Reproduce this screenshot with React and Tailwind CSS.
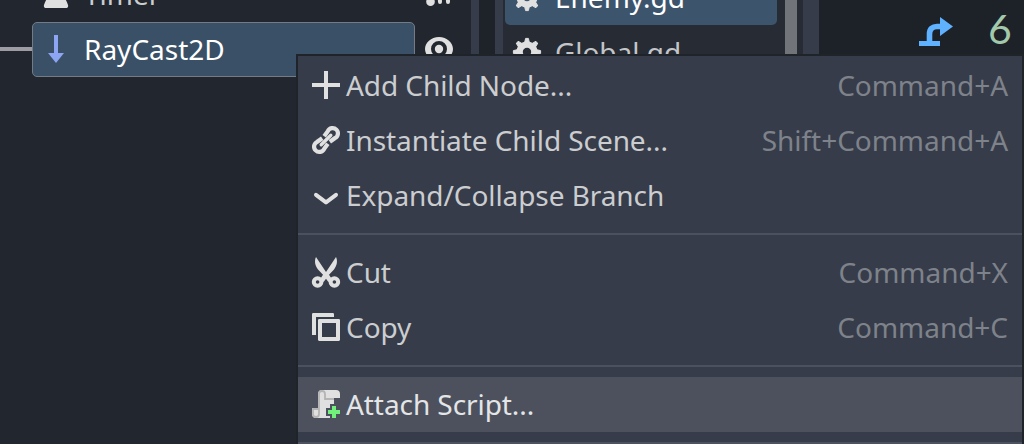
import React from 'react';

const ICON = 'block h-8 w-8 shrink-0';

function PlusIcon() {
  return (
    <svg viewBox="0 0 16 16" className={ICON} fill="#e0e0e0">
      <path d="M7 1v6H1v2h6v6h2V9h6V7H9V1z" />
    </svg>
  );
}

function LinkIcon() {
  return (
    <svg viewBox="0 0 16 16" className={ICON} fill="none" stroke="#e0e0e0" strokeWidth="2.1">
      <path d="M7.1 6.1 8.900 3.600a2.650 2.650 0 1 1 3.500 3.500L9.900 8.900" />
      <path d="M8.900 9.900 7.100 12.400a2.650 2.650 0 1 1-3.500-3.500L6.100 7.100" />
      <path d="M5.6 10.4 10.4 5.6" strokeWidth="1.7" strokeLinecap="round" />
    </svg>
  );
}

function ChevronIcon() {
  return (
    <svg viewBox="0 0 16 16" className={ICON} fill="none" stroke="#e0e0e0" strokeWidth="2" strokeLinecap="round" strokeLinejoin="round">
      <path d="m3 7.9 5 3.8 5-3.8" />
    </svg>
  );
}

function CutIcon() {
  return (
    <svg viewBox="0 0 16 16" className={ICON} fill="#e0e0e0">
      <path d="M3 .5C2 2.6 2.6 5 4 6.700L6.500 9.400 5 11.600l1.800 1.400L8 11.400l1.200 1.600 1.800-1.400-1.500-2.200L12 6.700C13.400 5 14 2.600 13 .5L8 8z" />
      <g fill="none" stroke="#e0e0e0" strokeWidth="2">
        <circle cx="3.8" cy="13" r="1.900" />
        <circle cx="12.2" cy="13" r="1.900" />
      </g>
    </svg>
  );
}

function CopyIcon() {
  return (
    <svg viewBox="0 0 16 16" className={ICON} fill="#e0e0e0">
      <path d="M1.6 1A.6.6 0 0 0 1 1.6V12h2V3h9V1.6a.6.6 0 0 0-.6-.6z" />
      <path fillRule="evenodd" d="M4.6 4a.6.6 0 0 0-.6.6v9.8c0 .3.3.6.6.6h9.8c.3 0 .6-.3.6-.6V4.6a.6.6 0 0 0-.6-.6zM6 6h7v7H6z" />
    </svg>
  );
}

function ScriptIcon() {
  return (
    <svg viewBox="0 0 16 16" className={ICON}>
      <path fill="#e0e0e0" d="M6 1a2 2 0 0 0-2 2v7H1v3a2 2 0 0 0 2 2h7v-1H8v-4h2V8h2V5h3V3a2 2 0 0 0-2-2z" />
      <path fill="none" stroke="#b4b4b4" strokeWidth=".9" d="M4.5 10.5h-3V13a1.5 1.5 0 0 0 3 0V3a1.5 1.5 0 0 1 3 0v2.5H12" />
      <path fill="#72f07c" d="M11 9h2v2h2v2h-2v2h-2v-2H9v-2h2z" />
    </svg>
  );
}

function GearIcon() {
  return (
    <svg viewBox="0 0 16 16" className={ICON} fill="none">
      <circle cx="8" cy="8" r="3.7" stroke="#e0e0e0" strokeWidth="3.2" />
      <g fill="#e0e0e0">
        {[0, 45, 90, 135, 180, 225, 270, 315].map((a) => (
          <path key={a} d="M7.3 1.2h1.4l.6 2.6H6.7z" stroke="#e0e0e0" strokeWidth=".5" strokeLinejoin="round" transform={`rotate(${a} 8 8)`} />
        ))}
      </g>
    </svg>
  );
}

function MenuItem({ icon, label, shortcut, active }) {
  return (
    <div className={`flex h-[55px] shrink-0 items-start pr-[14px] pl-3 pt-[11px] ${active ? 'bg-[#4c515d] text-[#e4e5e7]' : 'text-[#cbcdd0]'}`}>
      {icon}
      <span className="-mt-[3px] ml-1 flex-1 tracking-[-0.07px]">{label}</span>
      <span className="-mt-[3px] tracking-[-0.03px] text-[#7e828a]">{shortcut}</span>
    </div>
  );
}

function Separator() {
  return (
    <div className="flex h-[22px] shrink-0 items-center">
      <div className="h-[2px] w-full bg-[#4b515e]" />
    </div>
  );
}

function SceneTree() {
  return (
    <div className="h-full w-[471px] shrink-0 overflow-hidden bg-[#22262e]">
      <div className="-mt-[33px] flex h-[55px] items-start pt-[11px]">
        <svg viewBox="0 0 32 32" className="ml-10 h-8 w-8" fill="#e0e0e0">
          <path d="M9 2h14v12l-4 4 4 1c3 2 4 5 5 8 .5 2-.5 3-2 3H6c-1.5 0-2.500-1-2-3 1-3 2-6 5-8l4-1-4-4z" />
        </svg>
        <span className="-mt-[3px] ml-3 w-[338px] text-[#cbcdd0]">Timer</span>
        <svg viewBox="0 0 32 32" className="h-8 w-8" fill="none" stroke="#e0e0e0" strokeWidth="4" strokeLinecap="round">
          <circle cx="8.5" cy="23.7" r="4.3" fill="#e0e0e0" stroke="none" />
          <path d="M8 13c6 0 10 4 10 11M8 5c11 0 18 7 18 19" />
        </svg>
      </div>
      <div className="flex h-[55px] items-start">
        <div className="mt-[25px] h-1 w-8 bg-[#9c9ca2]" />
        <div className="flex h-[55px] w-[383px] items-start rounded-[5px] border border-[#737b84] bg-[#3a5067] pt-[10px]">
          <svg viewBox="0 0 32 32" className="ml-[7px] h-8 w-8" fill="#8da5f3">
            <path d="M14 2h4v18h6l-8 10-8-10h6z" />
          </svg>
          <span className="-mt-[3px] ml-3 text-white">RayCast2D</span>
        </div>
        <svg viewBox="0 0 32 32" className="mt-[11px] ml-2 h-8 w-8">
          <path
            fill="#e0e0e0"
            fillRule="evenodd"
            d="M16 4C8 4 2 10 2 16s6 12 14 12 14-6 14-12S24 4 16 4zm0 4a8 8 0 1 1 0 16 8 8 0 0 1 0-16z"
          />
          <circle cx="16" cy="16" r="4.2" fill="#e0e0e0" />
        </svg>
      </div>
    </div>
  );
}

function ScriptList() {
  return (
    <div className="flex h-full w-[300px] shrink-0 overflow-hidden bg-[#262b34]">
      <div className="ml-[2px] w-[272px]">
        <div className="-mt-[30px] flex h-[55px] items-start rounded-[5px] bg-[#3d546d] pt-[11px]">
          <div className="ml-[6px]"><GearIcon /></div>
          <span className="-mt-[3px] ml-3 text-white">Enemy.gd</span>
        </div>
        <div className="flex h-[55px] items-start pt-[11px]">
          <div className="ml-[6px]"><GearIcon /></div>
          <span className="-mt-[3px] ml-3 tracking-[-0.06px] text-[#c3c5c8]">Global.gd</span>
        </div>
      </div>
      <div className="ml-2 h-full w-3 bg-[#717479]" />
    </div>
  );
}

export default function App() {
  return (
    <div className="relative h-[444px] w-[1024px] overflow-hidden bg-[#1d2229] font-['Noto_Sans',sans-serif] text-[28px] leading-[38px] whitespace-nowrap">
      <div className="flex h-full">
        <SceneTree />
        <div className="w-2 shrink-0 bg-[#363c4a]" />
        <div className="w-4 shrink-0 bg-[#1e2329]" />
        <div className="w-2 shrink-0 bg-[#363c4a]" />
        <ScriptList />
        <div className="w-4 shrink-0 bg-[#363c4a]" />
        <div className="flex h-[62px] flex-1 items-start bg-[#1d2229]">
          <svg viewBox="0 0 36 32" className="mt-[15px] ml-[99px] h-8 w-9">
            <path fill="none" stroke="#5fb2ff" strokeWidth="5.6" d="M11.5 28V19c0-5 3-7.500 7.500-7.500h5" />
            <path fill="#5fb2ff" d="M1 26h21v5H1zM22 2l13 9.5L22 21z" />
          </svg>
          <span className="mt-[10px] ml-[34px] font-['Lato',sans-serif] text-[41px] text-[#a3c9ab]">6</span>
        </div>
      </div>

      <div className="absolute top-[54px] left-[296px] flex h-[400px] w-[728px] flex-col border-2 border-[#1f242b] bg-[#363c49] pt-[2px]">
        <MenuItem icon={<PlusIcon />} label="Add Child Node..." shortcut="Command+A" />
        <MenuItem icon={<LinkIcon />} label="Instantiate Child Scene..." shortcut="Shift+Command+A" />
        <MenuItem icon={<ChevronIcon />} label="Expand/Collapse Branch" />
        <Separator />
        <MenuItem icon={<CutIcon />} label="Cut" shortcut="Command+X" />
        <MenuItem icon={<CopyIcon />} label="Copy" shortcut="Command+C" />
        <Separator />
        <MenuItem icon={<ScriptIcon />} label="Attach Script..." active />
        <Separator />
      </div>
    </div>
  );
}
